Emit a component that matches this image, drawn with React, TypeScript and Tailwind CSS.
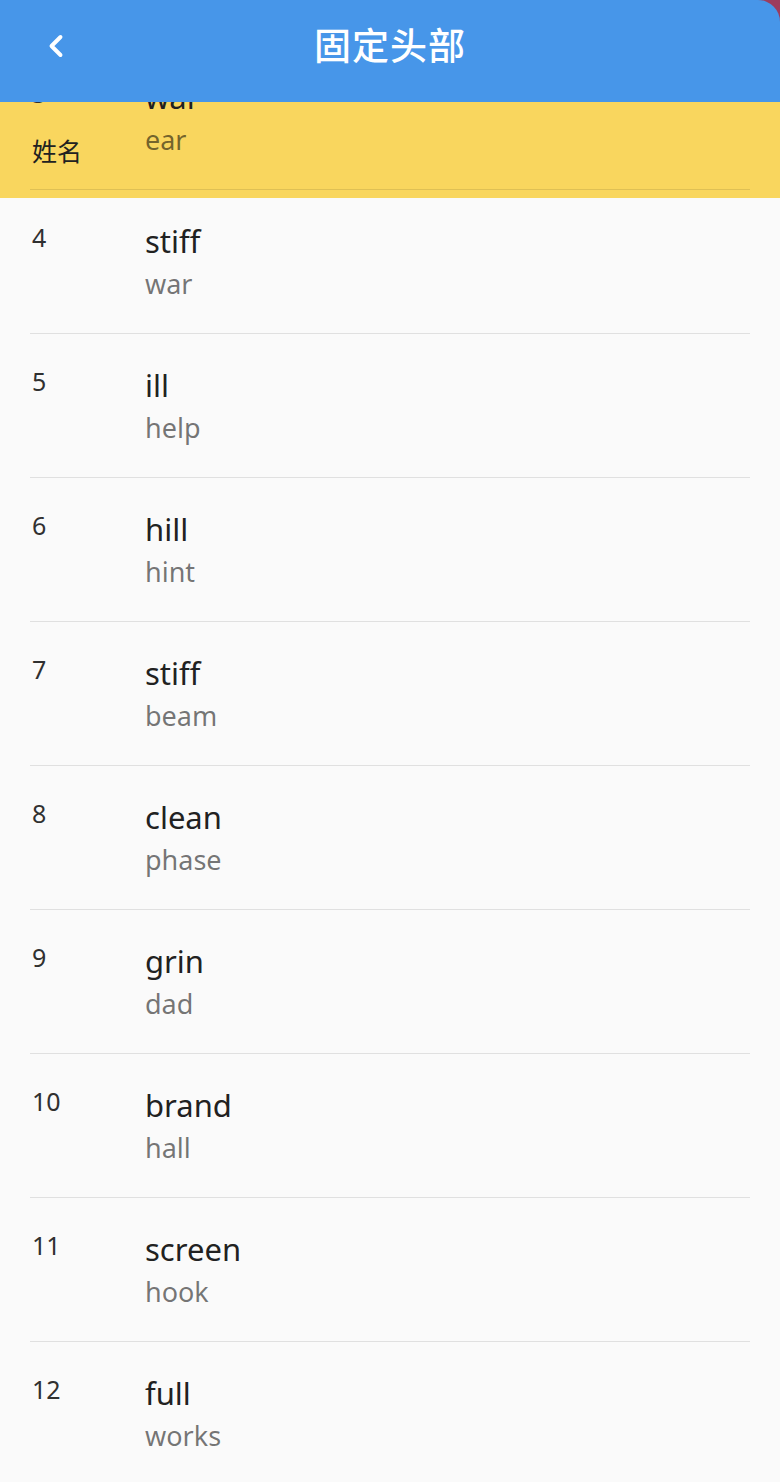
import { ChevronLeft } from "lucide-react";

const rows = [
  { id: 4, title: "stiff", sub: "war" },
  { id: 5, title: "ill", sub: "help" },
  { id: 6, title: "hill", sub: "hint" },
  { id: 7, title: "stiff", sub: "beam" },
  { id: 8, title: "clean", sub: "phase" },
  { id: 9, title: "grin", sub: "dad" },
  { id: 10, title: "brand", sub: "hall" },
  { id: 11, title: "screen", sub: "hook" },
  { id: 12, title: "full", sub: "works" },
];

const font = { fontFamily: '"Noto Sans", "Noto Sans CJK SC", sans-serif' };

const Row = ({ id, title, sub, line = "border-[#e0e0e0]" }: { id: number; title: string; sub: string; line?: string }) => (
  <div className={`mx-[30px] h-[144px] border-b ${line} flex shrink-0`}>
    <div className="w-[115px] pl-[2px] pt-[32px] text-[25px] leading-[30px] text-[#303030]">{id}</div>
    <div className="flex flex-col pt-[31px]">
      <span className="text-[31px] leading-[40px] text-[#212121]">{title}</span>
      <span className="mt-[5px] text-[27px] leading-[36px] text-black/55">{sub}</span>
    </div>
  </div>
);

export default function App() {
  return (
    <div className="w-[780px] h-[1482px] overflow-hidden bg-[#fafafa] flex flex-col" style={font}>
      <div className="bg-[#9c3c5e] shrink-0">
        <header className="h-[102px] pb-[10px] bg-[#4796e9] rounded-tr-[22px] flex items-center relative">
          <ChevronLeft className="ml-[38px] w-[36px] h-[36px] text-white" strokeWidth={2.6} />
          <h1 className="absolute left-0 right-0 text-center text-white text-[37px] font-medium tracking-[1px]">固定头部</h1>
        </header>
      </div>

      <div className="relative z-10 h-[96px] bg-[#f9d65e] overflow-hidden shrink-0">
        <div className="mt-[-56px]">
          <Row id={3} title="war" sub="ear" line="border-black/10" />
        </div>
        <span className="absolute left-[32px] top-[32px] text-[25px] leading-[34px] text-[#212121]">姓名</span>
      </div>

      <div className="mt-[-8px] flex flex-col">
        {rows.map((r) => (
          <Row key={r.id} {...r} />
        ))}
      </div>
    </div>
  );
}
